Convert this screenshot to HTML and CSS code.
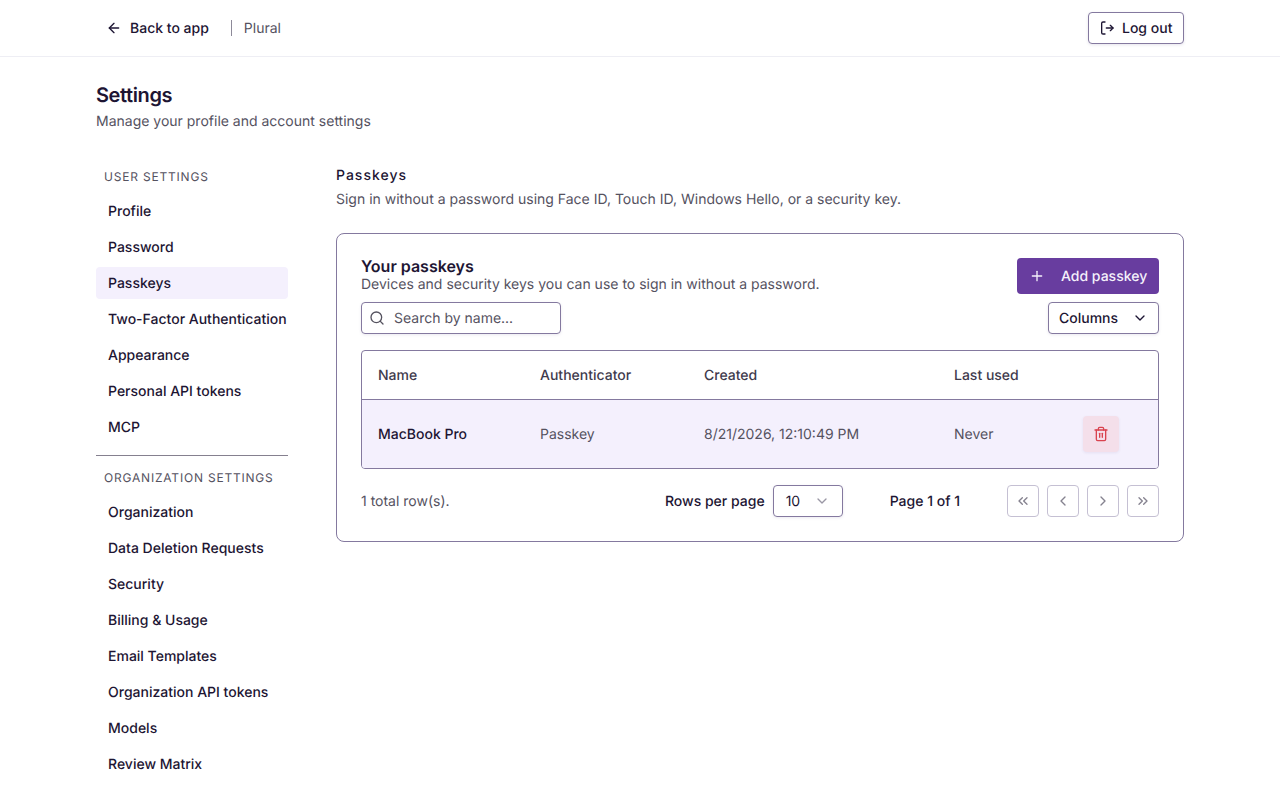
FILE: index.html
```html
<!DOCTYPE html>
<html>
<head>
    <link rel="stylesheet" href="styles.css">
</head>
<body>
    <header class="topbar">
        <div class="topbar-inner">
            <div class="topbar-left">
                <a class="back-link">
                    <svg class="icon" viewBox="0 0 24 24"><path d="m12 19-7-7 7-7"/><path d="M19 12H5"/></svg>
                    <span class="text-low">Back to app</span>
                </a>
                <span class="org-name">Plural</span>
            </div>
            <button class="btn btn-logout">
                <svg class="icon" viewBox="0 0 24 24"><path d="M9 3H6a2 2 0 0 0-2 2v14a2 2 0 0 0 2 2h3"/><path d="M11 12h10"/><path d="m17 8 4 4-4 4"/></svg>
                Log out
            </button>
        </div>
    </header>

    <div class="page">
        <h1 class="page-title">Settings</h1>
        <p class="page-sub">Manage your profile and account settings</p>

        <div class="layout">
            <nav class="sidebar">
                <div class="nav-label">User settings</div>
                <a class="nav-item">Profile</a>
                <a class="nav-item">Password</a>
                <a class="nav-item active">Passkeys</a>
                <a class="nav-item">Two-Factor Authentication</a>
                <a class="nav-item">Appearance</a>
                <a class="nav-item">Personal API tokens</a>
                <a class="nav-item">MCP</a>
                <div class="nav-divider"></div>
                <div class="nav-label">Organization settings</div>
                <a class="nav-item">Organization</a>
                <a class="nav-item">Data Deletion Requests</a>
                <a class="nav-item">Security</a>
                <a class="nav-item">Billing &amp; Usage</a>
                <a class="nav-item">Email Templates</a>
                <a class="nav-item">Organization API tokens</a>
                <a class="nav-item">Models</a>
                <a class="nav-item">Review Matrix</a>
            </nav>

            <main class="content">
                <h2 class="section-title">Passkeys</h2>
                <p class="section-sub">Sign in without a password using Face ID, Touch ID, Windows Hello, or a security key.</p>

                <section class="card">
                    <div class="card-head">
                        <div>
                            <div class="card-title">Your passkeys</div>
                            <div class="card-desc">Devices and security keys you can use to sign in without a password.</div>
                        </div>
                        <button class="btn btn-primary">
                            <svg class="icon" viewBox="0 0 24 24"><path d="M5 12h14"/><path d="M12 5v14"/></svg>
                            Add passkey
                        </button>
                    </div>

                    <div class="toolbar">
                        <div class="search">
                            <svg class="icon" viewBox="0 0 24 24"><circle cx="11" cy="11" r="8"/><path d="m21 21-4.3-4.3"/></svg>
                            <span class="text-low">Search by name...</span>
                        </div>
                        <button class="btn btn-columns">
                            Columns
                            <svg class="icon" viewBox="0 0 24 24"><path d="m6 9 6 6 6-6"/></svg>
                        </button>
                    </div>

                    <div class="table-wrap">
                        <table class="table">
                            <colgroup>
                                <col class="col-name">
                                <col class="col-auth">
                                <col class="col-created">
                                <col class="col-used">
                                <col class="col-action">
                            </colgroup>
                            <thead>
                                <tr>
                                    <th>Name</th>
                                    <th>Authenticator</th>
                                    <th>Created</th>
                                    <th>Last used</th>
                                    <th></th>
                                </tr>
                            </thead>
                            <tbody>
                                <tr>
                                    <td class="cell-name">MacBook Pro</td>
                                    <td>Passkey</td>
                                    <td>8/21/2026, 12:10:49 PM</td>
                                    <td>Never</td>
                                    <td class="cell-action">
                                        <button class="btn-delete">
                                            <svg class="icon" viewBox="0 0 24 24"><path d="M3 6h18"/><path d="M19 6v14a2 2 0 0 1-2 2H7a2 2 0 0 1-2-2V6"/><path d="M8 6V4a2 2 0 0 1 2-2h4a2 2 0 0 1 2 2v2"/><path d="M10 11v6"/><path d="M14 11v6"/></svg>
                                        </button>
                                    </td>
                                </tr>
                            </tbody>
                        </table>
                    </div>

                    <div class="pager">
                        <div class="pager-count text-low">1 total row(s).</div>
                        <div class="pager-controls">
                            <div class="rows-per-page">
                                <span class="text-low">Rows per page</span>
                                <div class="rows-select">
                                    <span class="text-low">10</span>
                                    <svg class="icon" viewBox="0 0 24 24"><path d="m6 9 6 6 6-6"/></svg>
                                </div>
                            </div>
                            <div class="page-of text-low">Page 1 of 1</div>
                            <div class="page-btns">
                                <button class="page-btn"><svg class="icon" viewBox="0 0 24 24"><path d="m11 17-5-5 5-5"/><path d="m18 17-5-5 5-5"/></svg></button>
                                <button class="page-btn"><svg class="icon" viewBox="0 0 24 24"><path d="m15 18-6-6 6-6"/></svg></button>
                                <button class="page-btn"><svg class="icon" viewBox="0 0 24 24"><path d="m9 18 6-6-6-6"/></svg></button>
                                <button class="page-btn"><svg class="icon" viewBox="0 0 24 24"><path d="m6 17 5-5-5-5"/><path d="m13 17 5-5-5-5"/></svg></button>
                            </div>
                        </div>
                    </div>
                </section>
            </main>
        </div>
    </div>
</body>
</html>
```

FILE: styles.css
```css
* {
    box-sizing: border-box;
}
body {
    margin: 0;
    background: #ffffff;
    color: #1d1533;
    font-family: Inter, "Noto Sans", sans-serif;
    font-size: 14px;
    line-height: 20px;
    text-rendering: geometricPrecision;
}
svg {
    fill: none;
    stroke: currentColor;
    stroke-width: 2;
    stroke-linecap: round;
    stroke-linejoin: round;
    flex-shrink: 0;
}
.icon {
    width: 16px;
    height: 16px;
}
.text-low {
    padding-top: 2px;
}
button {
    font-family: inherit;
    font-size: 14px;
    color: inherit;
    text-rendering: inherit;
}
.btn {
    display: flex;
    align-items: center;
    border-radius: 4px;
    font-weight: 500;
    padding: 0;
}
.topbar {
    height: 57px;
    border-bottom: 1px solid #eeeef4;
}
.topbar-inner {
    width: 1088px;
    height: 56px;
    margin: 0 auto;
    display: flex;
    align-items: center;
    justify-content: space-between;
}
.topbar-left {
    display: flex;
    align-items: center;
    padding-left: 10px;
}
.back-link {
    display: flex;
    align-items: center;
    gap: 8px;
    font-weight: 500;
}
.org-name {
    margin-left: 22px;
    padding-left: 12px;
    border-left: 1px solid #8d8a99;
    height: 16px;
    line-height: 18px;
    color: #55525f;
}
.btn-logout {
    width: 96px;
    height: 32px;
    gap: 7px;
    padding-left: 10px;
    background: #fff;
    border: 1px solid #84799f;
    box-shadow: 0 1px 3px rgba(60, 40, 110, 0.12);
}
.page {
    width: 1088px;
    margin: 0 auto;
    padding-top: 26px;
}
.page-title {
    margin: 0;
    font-size: 20px;
    line-height: 24px;
    font-weight: 600;
    letter-spacing: -0.4px;
}
.page-sub {
    margin: 5px 0 0;
    color: #55525f;
}
.layout {
    display: flex;
    gap: 48px;
    margin-top: 33px;
}
.sidebar {
    width: 192px;
    flex-shrink: 0;
}
.nav-label {
    padding: 0 8px;
    height: 26px;
    line-height: 24px;
    font-size: 12px;
    letter-spacing: 0.8px;
    text-transform: uppercase;
    color: #55525f;
}
.nav-item {
    display: block;
    margin: 4px 0;
    height: 32px;
    line-height: 34px;
    padding-left: 12px;
    border-radius: 4px;
    font-weight: 500;
    white-space: nowrap;
}
.nav-item.active {
    background: #f4f0fd;
}
.nav-divider {
    height: 1px;
    background: #85808f;
    margin: 12px 0 10px;
}
.content {
    flex: 1;
    min-width: 0;
}
.section-title {
    margin: 0;
    padding-top: 1px;
    font-size: 14px;
    line-height: 20px;
    font-weight: 500;
    letter-spacing: 1px;
}
.section-sub {
    margin: 4px 0 0;
    color: #55525f;
}
.card {
    margin-top: 23px;
    height: 309px;
    padding: 24px;
    background: #fff;
    border: 1px solid #84799f;
    border-radius: 8px;
}
.card-head {
    display: flex;
    justify-content: space-between;
    align-items: flex-start;
    height: 36px;
}
.card-title {
    margin-top: -2px;
    font-size: 16px;
    line-height: 20px;
    font-weight: 600;
}
.card-desc {
    margin-top: -1px;
    line-height: 20px;
    color: #55525f;
}
.btn-primary {
    width: 142px;
    height: 36px;
    gap: 16px;
    padding-left: 12px;
    border: none;
    background: #683d9f;
    color: #f5f1fb;
}
.toolbar {
    display: flex;
    justify-content: space-between;
    margin-top: 8px;
}
.search {
    display: flex;
    align-items: center;
    gap: 9px;
    width: 200px;
    height: 32px;
    padding-left: 7px;
    border: 1px solid #84799f;
    border-radius: 4px;
    box-shadow: 0 1px 3px rgba(60, 40, 110, 0.1);
    color: #55525f;
}
.btn-columns {
    width: 111px;
    height: 32px;
    padding: 0 10px;
    justify-content: space-between;
    background: #fff;
    border: 1px solid #84799f;
    box-shadow: 0 1px 3px rgba(60, 40, 110, 0.1);
}
.table-wrap {
    margin-top: 16px;
    border: 1px solid #84799f;
    border-radius: 4px;
    overflow: hidden;
}
.table {
    width: 100%;
    border-collapse: collapse;
    table-layout: fixed;
}
.col-name {
    width: 162px;
}
.col-auth {
    width: 164px;
}
.col-created {
    width: 250px;
}
.col-used {
    width: 129px;
}
.col-action {
    width: 91px;
}
.table th {
    height: 48px;
    padding: 2px 0 0 16px;
    text-align: left;
    font-weight: 500;
    color: #3f3b4d;
    border-bottom: 1px solid #84799f;
}
.table td {
    height: 69px;
    padding: 2px 0 0 16px;
    background: #f4f0fd;
    color: #55525f;
}
.table td.cell-name {
    font-weight: 500;
    color: #1d1533;
}
.table td.cell-action {
    padding-top: 0;
}
.btn-delete {
    display: flex;
    align-items: center;
    justify-content: center;
    width: 36px;
    height: 36px;
    padding: 0;
    border: none;
    border-radius: 4px;
    background: #f4dfea;
    color: #d9434f;
    box-shadow: 0 1px 3px rgba(60, 40, 110, 0.08);
}
.pager {
    display: flex;
    justify-content: space-between;
    align-items: center;
    margin-top: 16px;
}
.pager-count {
    color: #55525f;
}
.pager-controls {
    display: flex;
    align-items: center;
    gap: 47px;
}
.rows-per-page {
    display: flex;
    align-items: center;
    gap: 8px;
    font-weight: 500;
}
.rows-select {
    display: flex;
    align-items: center;
    justify-content: space-between;
    width: 70px;
    height: 32px;
    padding: 0 12px;
    border: 1px solid #84799f;
    border-radius: 4px;
    box-shadow: 0 1px 3px rgba(60, 40, 110, 0.1);
    font-weight: 400;
}
.rows-select svg {
    color: #9a97a5;
}
.page-of {
    font-weight: 500;
}
.page-btns {
    display: flex;
    gap: 8px;
}
.page-btn {
    display: flex;
    align-items: center;
    justify-content: center;
    width: 32px;
    height: 32px;
    padding: 0;
    background: #fff;
    border: 1px solid #c5c0d3;
    border-radius: 4px;
    color: #85828f;
}
```
